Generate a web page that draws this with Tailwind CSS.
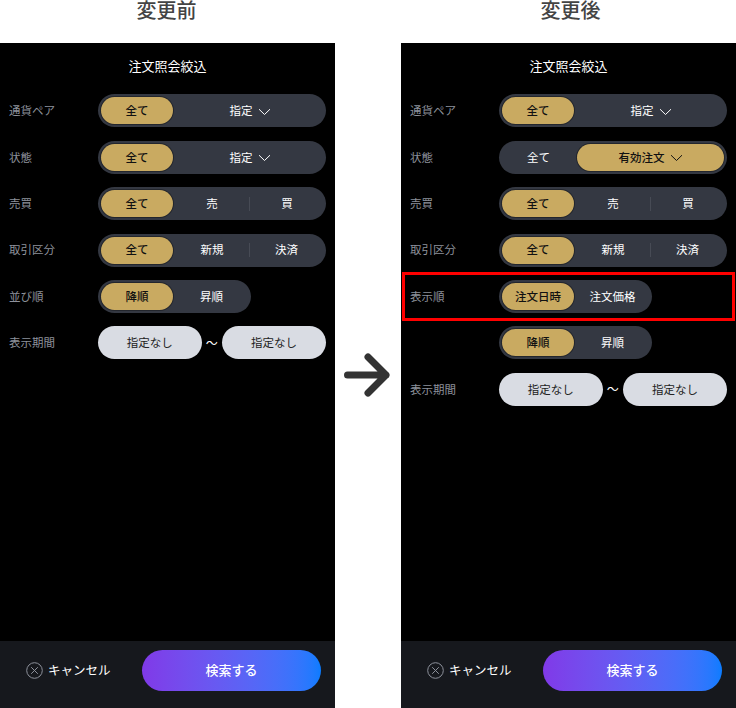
<!DOCTYPE html>
<html lang="ja">
<head>
    <meta charset="UTF-8">
    <title>注文照会絞込</title>
    <script src="https://cdn.jsdelivr.net/npm/@tailwindcss/browser@4"></script>
</head>
<body class="bg-white font-['Noto_Sans_CJK_JP','Noto_Sans',sans-serif]">
<div class="flex w-[736px] h-[708px] overflow-hidden">

    <!-- 変更前 -->
    <div class="w-[335px] h-full flex flex-col">
        <div class="h-[43px] pt-[1px] pr-[2px] text-center text-[20px] leading-[18px] font-medium text-[#444]">変更前</div>
        <div class="flex-1 bg-black flex flex-col">
            <div class="h-[51.3px] pt-[14px] text-center text-[13px] leading-[18px] text-white">注文照会絞込</div>
            <div class="flex-1 flex flex-col gap-[13.45px]">
                <div class="h-[33px] flex items-center pl-[9px] pr-[9px]">
                    <div class="w-[89px] text-[11.5px] text-[#8d919b]">通貨ペア</div>
                    <div class="w-[228px] h-full p-[3px] rounded-full bg-[#343842] flex items-center text-[11.5px] text-white">
                        <div class="w-[72px] h-full rounded-full bg-[#c9aa61] text-[#111] font-medium flex items-center justify-center shadow-[0_0_0_1px_#23262d]">全て</div>
                        <div class="flex-1 flex items-center justify-center gap-[5px] pl-[4px]">指定
                            <svg width="13" height="8" viewBox="0 0 13 8" fill="none" stroke="currentColor" stroke-width="1" class="mt-[2px]"><path d="M1 1.2 6.5 6.5 12 1.2"/></svg>
                        </div>
                    </div>
                </div>
                <div class="h-[33px] flex items-center pl-[9px] pr-[9px]">
                    <div class="w-[89px] text-[11.5px] text-[#8d919b]">状態</div>
                    <div class="w-[228px] h-full p-[3px] rounded-full bg-[#343842] flex items-center text-[11.5px] text-white">
                        <div class="w-[72px] h-full rounded-full bg-[#c9aa61] text-[#111] font-medium flex items-center justify-center shadow-[0_0_0_1px_#23262d]">全て</div>
                        <div class="flex-1 flex items-center justify-center gap-[5px] pl-[4px]">指定
                            <svg width="13" height="8" viewBox="0 0 13 8" fill="none" stroke="currentColor" stroke-width="1" class="mt-[2px]"><path d="M1 1.2 6.5 6.5 12 1.2"/></svg>
                        </div>
                    </div>
                </div>
                <div class="h-[33px] flex items-center pl-[9px] pr-[9px]">
                    <div class="w-[89px] text-[11.5px] text-[#8d919b]">売買</div>
                    <div class="w-[228px] h-full p-[3px] rounded-full bg-[#343842] flex items-center text-[11.5px] text-white">
                        <div class="w-[72px] h-full rounded-full bg-[#c9aa61] text-[#111] font-medium flex items-center justify-center shadow-[0_0_0_1px_#23262d]">全て</div>
                        <div class="w-[76px] pl-[2px] text-center">売</div>
                        <div class="w-px h-[14px] bg-[#474b55]"></div>
                        <div class="flex-1 pl-[1px] text-center">買</div>
                    </div>
                </div>
                <div class="h-[33px] flex items-center pl-[9px] pr-[9px]">
                    <div class="w-[89px] text-[11.5px] text-[#8d919b]">取引区分</div>
                    <div class="w-[228px] h-full p-[3px] rounded-full bg-[#343842] flex items-center text-[11.5px] text-white">
                        <div class="w-[72px] h-full rounded-full bg-[#c9aa61] text-[#111] font-medium flex items-center justify-center shadow-[0_0_0_1px_#23262d]">全て</div>
                        <div class="w-[76px] pl-[2px] text-center">新規</div>
                        <div class="w-px h-[14px] bg-[#474b55]"></div>
                        <div class="flex-1 text-center">決済</div>
                    </div>
                </div>
                <div class="h-[33px] flex items-center pl-[9px] pr-[9px]">
                    <div class="w-[89px] text-[11.5px] text-[#8d919b]">並び順</div>
                    <div class="w-[153px] h-full p-[3px] rounded-full bg-[#343842] flex items-center text-[11.5px] text-white">
                        <div class="w-[72px] h-full rounded-full bg-[#c9aa61] text-[#111] font-medium flex items-center justify-center shadow-[0_0_0_1px_#23262d]">降順</div>
                        <div class="flex-1 pl-[2px] text-center">昇順</div>
                    </div>
                </div>
                <div class="h-[33px] flex items-center pl-[9px] pr-[9px]">
                    <div class="w-[89px] text-[11.5px] text-[#8d919b]">表示期間</div>
                    <div class="w-[103.5px] h-full rounded-full bg-[#d9dce3] flex items-center justify-center text-[11.5px] text-[#222]">指定なし</div>
                    <div class="w-[20.5px] text-center text-[12px] text-white">～</div>
                    <div class="w-[104px] h-full rounded-full bg-[#d9dce3] flex items-center justify-center text-[11.5px] text-[#222]">指定なし</div>
                </div>
            </div>
            <div class="h-[67px] bg-[#16181d] flex items-start pt-[9px] pl-[26px] pr-[14px]">
                <div class="h-[41px] flex items-center gap-[5px] text-[12.5px] text-white">
                    <svg width="17" height="17" viewBox="0 0 17 17" fill="none" stroke="#8d919b" stroke-width="1"><circle cx="8.5" cy="8.5" r="7.8"/><path d="M5.2 5.2 11.8 11.8M11.8 5.2 5.2 11.8"/></svg>
                    キャンセル
                </div>
                <div class="ml-auto w-[179px] h-[41px] pb-[1px] rounded-full bg-gradient-to-r from-[#8039e8] to-[#0a7cff] flex items-center justify-center text-[13px] font-medium text-white">検索する</div>
            </div>
        </div>
    </div>

    <!-- 矢印 -->
    <div class="w-[66px] pt-[353px] pl-[9px]">
        <svg width="46" height="44" viewBox="0 0 46 44" fill="none" stroke="#333" stroke-width="7" stroke-linecap="round" stroke-linejoin="round"><path d="M3.5 22H42M24 4 42 22 24 40"/></svg>
    </div>

    <!-- 変更後 -->
    <div class="w-[335px] h-full flex flex-col">
        <div class="h-[43px] pt-[1px] pl-[4px] text-center text-[20px] leading-[18px] font-medium text-[#444]">変更後</div>
        <div class="flex-1 bg-black flex flex-col">
            <div class="h-[51.3px] pt-[14px] text-center text-[13px] leading-[18px] text-white">注文照会絞込</div>
            <div class="flex-1 flex flex-col gap-[13.45px]">
                <div class="h-[33px] flex items-center pl-[9px] pr-[9px]">
                    <div class="w-[89px] text-[11.5px] text-[#8d919b]">通貨ペア</div>
                    <div class="w-[228px] h-full p-[3px] rounded-full bg-[#343842] flex items-center text-[11.5px] text-white">
                        <div class="w-[72px] h-full rounded-full bg-[#c9aa61] text-[#111] font-medium flex items-center justify-center shadow-[0_0_0_1px_#23262d]">全て</div>
                        <div class="flex-1 flex items-center justify-center gap-[5px] pl-[4px]">指定
                            <svg width="13" height="8" viewBox="0 0 13 8" fill="none" stroke="currentColor" stroke-width="1" class="mt-[2px]"><path d="M1 1.2 6.5 6.5 12 1.2"/></svg>
                        </div>
                    </div>
                </div>
                <div class="h-[33px] flex items-center pl-[9px] pr-[9px]">
                    <div class="w-[89px] text-[11.5px] text-[#8d919b]">状態</div>
                    <div class="w-[228px] h-full p-[3px] rounded-full bg-[#343842] flex items-center text-[11.5px] text-white">
                        <div class="w-[75px] pr-[2px] text-center">全て</div>
                        <div class="flex-1 h-full rounded-full bg-[#c9aa61] text-[#111] font-medium flex items-center justify-center gap-[5px] shadow-[0_0_0_1px_#23262d]">有効注文
                            <svg width="13" height="8" viewBox="0 0 13 8" fill="none" stroke="currentColor" stroke-width="1" class="mt-[2px]"><path d="M1 1.2 6.5 6.5 12 1.2"/></svg>
                        </div>
                    </div>
                </div>
                <div class="h-[33px] flex items-center pl-[9px] pr-[9px]">
                    <div class="w-[89px] text-[11.5px] text-[#8d919b]">売買</div>
                    <div class="w-[228px] h-full p-[3px] rounded-full bg-[#343842] flex items-center text-[11.5px] text-white">
                        <div class="w-[72px] h-full rounded-full bg-[#c9aa61] text-[#111] font-medium flex items-center justify-center shadow-[0_0_0_1px_#23262d]">全て</div>
                        <div class="w-[76px] pl-[2px] text-center">売</div>
                        <div class="w-px h-[14px] bg-[#474b55]"></div>
                        <div class="flex-1 pl-[1px] text-center">買</div>
                    </div>
                </div>
                <div class="h-[33px] flex items-center pl-[9px] pr-[9px]">
                    <div class="w-[89px] text-[11.5px] text-[#8d919b]">取引区分</div>
                    <div class="w-[228px] h-full p-[3px] rounded-full bg-[#343842] flex items-center text-[11.5px] text-white">
                        <div class="w-[72px] h-full rounded-full bg-[#c9aa61] text-[#111] font-medium flex items-center justify-center shadow-[0_0_0_1px_#23262d]">全て</div>
                        <div class="w-[76px] pl-[2px] text-center">新規</div>
                        <div class="w-px h-[14px] bg-[#474b55]"></div>
                        <div class="flex-1 text-center">決済</div>
                    </div>
                </div>
                <div class="relative h-[33px] flex items-center pl-[9px] pr-[9px]">
                    <!-- 赤枠 -->
                    <div class="absolute left-[1px] right-[1px] -top-[8px] -bottom-[8px] border-[3px] border-[#ff0000]"></div>
                    <div class="w-[89px] text-[11.5px] text-[#8d919b]">表示順</div>
                    <div class="w-[153px] h-full p-[3px] rounded-full bg-[#343842] flex items-center text-[11.5px] text-white">
                        <div class="w-[72px] h-full rounded-full bg-[#c9aa61] text-[#111] font-medium flex items-center justify-center shadow-[0_0_0_1px_#23262d]">注文日時</div>
                        <div class="flex-1 pl-[2px] text-center">注文価格</div>
                    </div>
                </div>
                <div class="h-[33px] flex items-center pl-[9px] pr-[9px]">
                    <div class="w-[89px]"></div>
                    <div class="w-[153px] h-full p-[3px] rounded-full bg-[#343842] flex items-center text-[11.5px] text-white">
                        <div class="w-[72px] h-full rounded-full bg-[#c9aa61] text-[#111] font-medium flex items-center justify-center shadow-[0_0_0_1px_#23262d]">降順</div>
                        <div class="flex-1 pl-[2px] text-center">昇順</div>
                    </div>
                </div>
                <div class="h-[33px] flex items-center pl-[9px] pr-[9px]">
                    <div class="w-[89px] text-[11.5px] text-[#8d919b]">表示期間</div>
                    <div class="w-[103.5px] h-full rounded-full bg-[#d9dce3] flex items-center justify-center text-[11.5px] text-[#222]">指定なし</div>
                    <div class="w-[20.5px] text-center text-[12px] text-white">～</div>
                    <div class="w-[104px] h-full rounded-full bg-[#d9dce3] flex items-center justify-center text-[11.5px] text-[#222]">指定なし</div>
                </div>
            </div>
            <div class="h-[67px] bg-[#16181d] flex items-start pt-[9px] pl-[26px] pr-[14px]">
                <div class="h-[41px] flex items-center gap-[5px] text-[12.5px] text-white">
                    <svg width="17" height="17" viewBox="0 0 17 17" fill="none" stroke="#8d919b" stroke-width="1"><circle cx="8.5" cy="8.5" r="7.8"/><path d="M5.2 5.2 11.8 11.8M11.8 5.2 5.2 11.8"/></svg>
                    キャンセル
                </div>
                <div class="ml-auto w-[179px] h-[41px] pb-[1px] rounded-full bg-gradient-to-r from-[#8039e8] to-[#0a7cff] flex items-center justify-center text-[13px] font-medium text-white">検索する</div>
            </div>
        </div>
    </div>

</div>
</body>
</html>
